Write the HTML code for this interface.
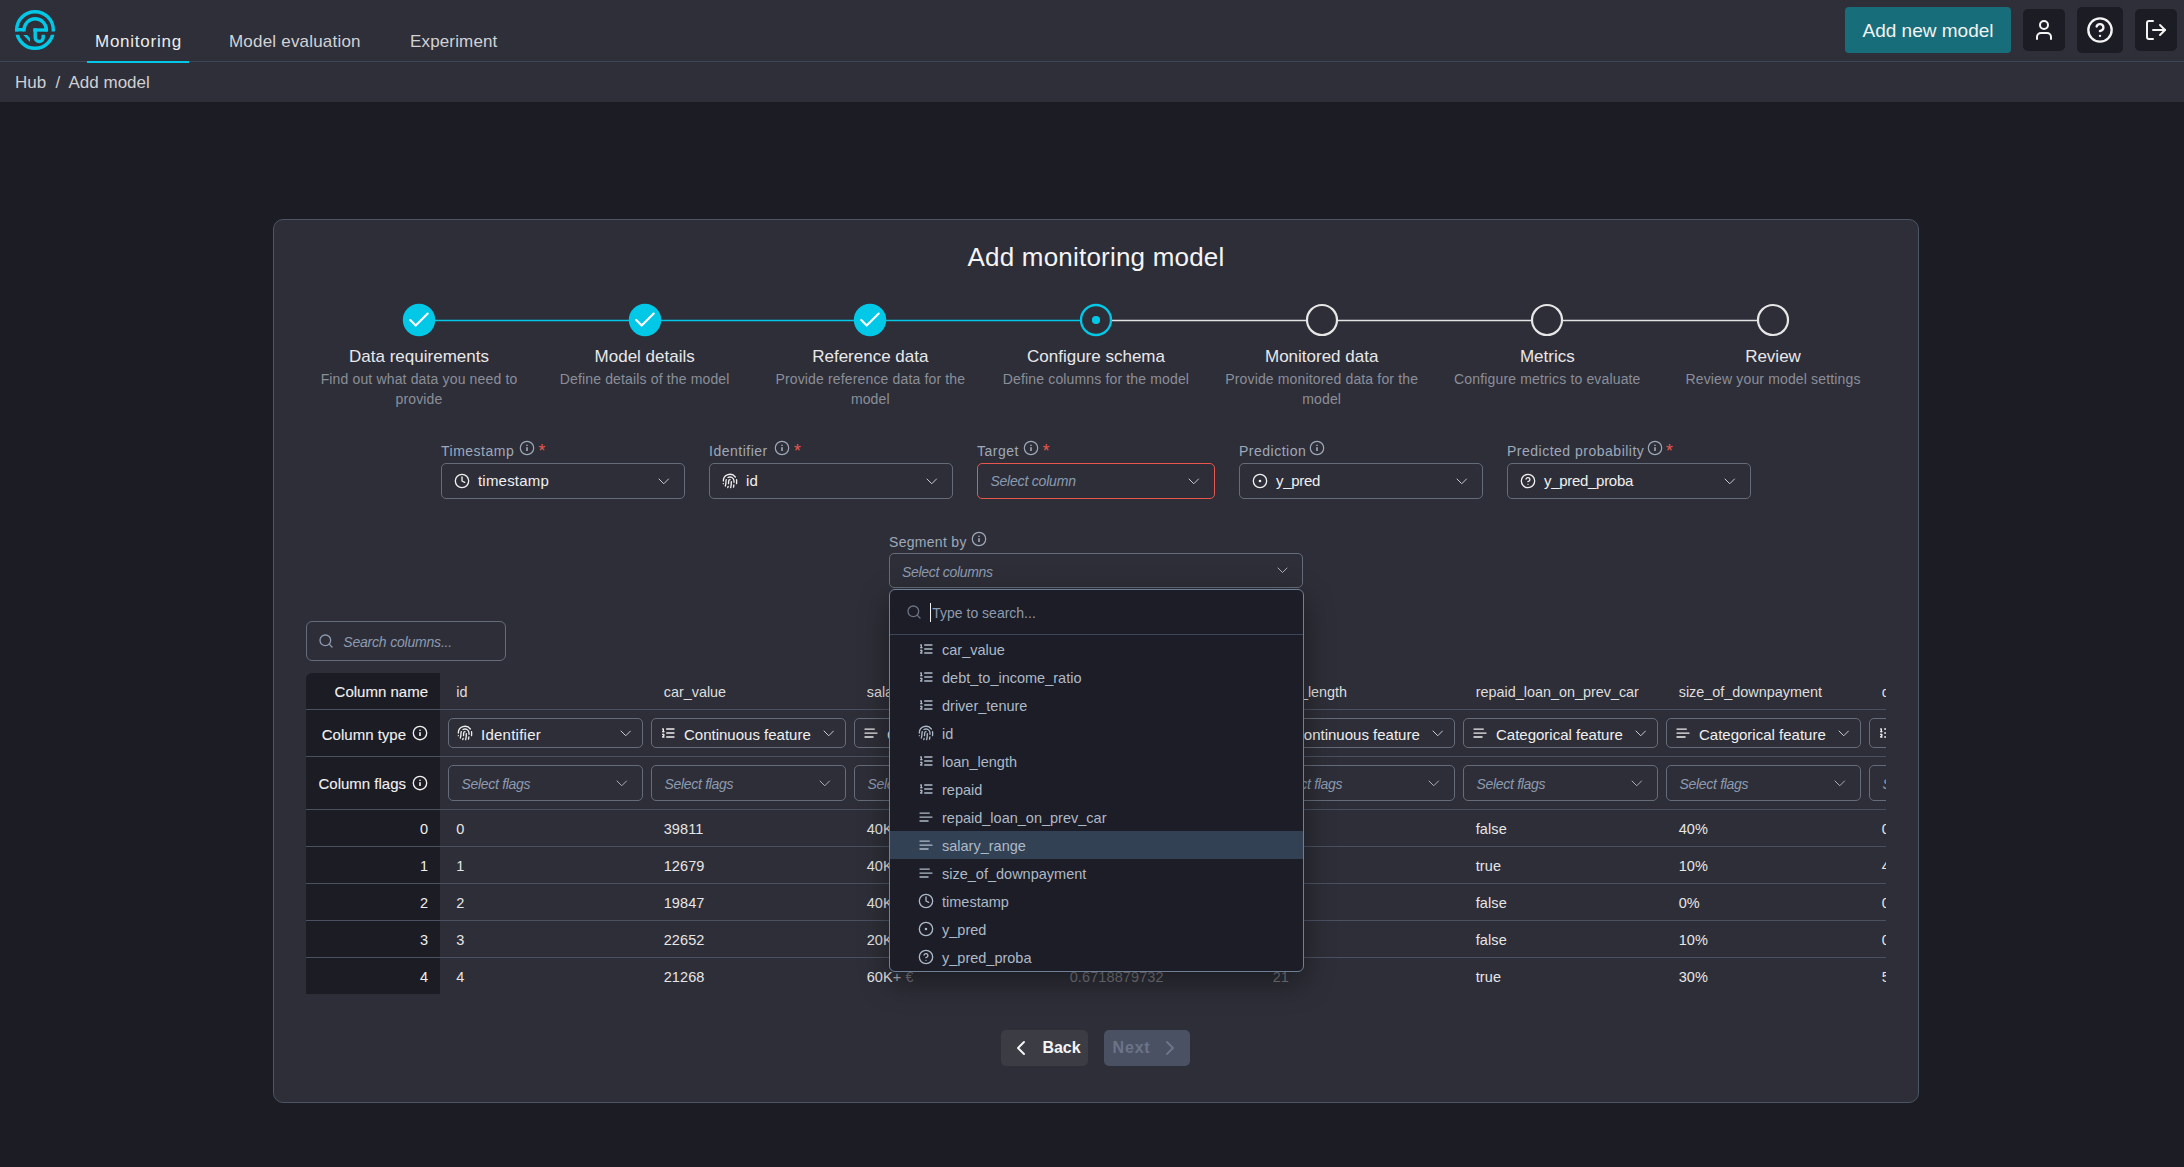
<!DOCTYPE html><html><head><meta charset="utf-8"><title>Add monitoring model</title><style>
html,body{margin:0;padding:0;}
body{width:2184px;height:1167px;overflow:hidden;position:relative;background:#1c1c24;font-family:"Liberation Sans", sans-serif;}
.t{position:absolute;white-space:nowrap;}
.r{position:absolute;}
</style></head><body>
<div class="r" style="left:0px;top:0px;width:2184px;height:61px;background:#2e2f38;"></div>
<div class="r" style="left:0px;top:61px;width:2184px;height:1px;background:#3b4656;"></div>
<div class="r" style="left:0px;top:62px;width:2184px;height:40px;background:#2e2f38;"></div>
<svg class="r" style="left:10px;top:5px;" width="50" height="50" viewBox="0 0 50 50" fill="none">
<defs><clipPath id="lgt"><rect x="0" y="0" width="100" height="31.6"/></clipPath>
<clipPath id="lgb"><rect x="0" y="34.8" width="100" height="30"/></clipPath></defs>
<g transform="translate(-10,-5)" stroke="#00c8e6" stroke-width="3.4" fill="none">
<circle cx="35" cy="30" r="18.3" clip-path="url(#lgt)"/>
<circle cx="35" cy="30" r="18.3" clip-path="url(#lgb)"/>
<path d="M15 29.7 H24" />
<path d="M24 31.6 V30 A11.2 11.2 0 0 1 46.4 30 V31.6" />
<path d="M33.3 30 H47.5" />
<path d="M35.2 28.5 V37.5 A4 4 0 0 0 43.2 37.5 V34.8" />
</g>
<polygon transform="translate(-10,-5)" points="23.3,35 27.2,35 30,38.2 30,42" fill="#00c8e6"/>
</svg>
<div class="t" style="left:95.00px;top:32.61px;font-size:17px;line-height:17px;color:#ececec;letter-spacing:0.75px;">Monitoring</div>
<div class="t" style="left:229.00px;top:32.61px;font-size:17px;line-height:17px;color:#d2d2d6;letter-spacing:0.2px;">Model evaluation</div>
<div class="t" style="left:410.00px;top:32.61px;font-size:17px;line-height:17px;color:#d2d2d6;letter-spacing:0.15px;">Experiment</div>
<div class="r" style="left:87px;top:61px;width:102px;height:2px;background:#00c8e6;"></div>
<div class="r" style="left:1845px;top:7px;width:166px;height:46px;background:#176e7a;border-radius:4px;"></div>
<div class="t" style="left:1845.00px;width:166px;text-align:center;top:20.92px;font-size:19px;line-height:19px;color:#f2f2f2;">Add new model</div>
<div class="r" style="left:2023px;top:9px;width:42px;height:42px;background:#1c1c24;border-radius:5px;"></div>
<div class="r" style="left:2077px;top:7px;width:46px;height:46px;background:#1c1c24;border-radius:5px;"></div>
<div class="r" style="left:2135px;top:9px;width:42px;height:42px;background:#1c1c24;border-radius:5px;"></div>
<div class="t" style="left:15.00px;top:73.61px;font-size:17px;line-height:17px;color:#d0d0d4;">Hub</div>
<div class="t" style="left:55.50px;top:73.61px;font-size:17px;line-height:17px;color:#d0d0d4;">/</div>
<div class="t" style="left:68.50px;top:73.61px;font-size:17px;line-height:17px;color:#d0d0d4;">Add model</div>
<div class="r" style="left:273px;top:219px;width:1646px;height:884px;background:#2e2e38;border:1px solid #4b5563;box-sizing:border-box;border-radius:10px;"></div>
<div class="t" style="left:796.00px;width:600px;text-align:center;top:243.99px;font-size:26px;line-height:26px;color:#f4f4f4;letter-spacing:0.2px;">Add monitoring model</div>
<svg class="r" style="left:400px;top:310px" width="1400" height="20" viewBox="400 310 1400 20"><line x1="419" y1="320.5" x2="1096" y2="320.5" stroke="#00c8e6" stroke-width="1.6"/><line x1="1096" y1="320.5" x2="1773" y2="320.5" stroke="#e2e2e2" stroke-width="1.6"/></svg>
<svg class="r" style="left:402px;top:303px;" width="34" height="34" viewBox="0 0 34 34" fill="none"><circle cx="17" cy="17" r="16.2" fill="#00c8e6"/><g transform="translate(3.9,4.0) scale(1.09)"><path d="M20 6 9 17l-5-5" stroke="#ffffff" stroke-width="2" fill="none" stroke-linecap="round" stroke-linejoin="round"/></g></svg>
<svg class="r" style="left:628px;top:303px;" width="34" height="34" viewBox="0 0 34 34" fill="none"><circle cx="17" cy="17" r="16.2" fill="#00c8e6"/><g transform="translate(3.9,4.0) scale(1.09)"><path d="M20 6 9 17l-5-5" stroke="#ffffff" stroke-width="2" fill="none" stroke-linecap="round" stroke-linejoin="round"/></g></svg>
<svg class="r" style="left:853px;top:303px;" width="34" height="34" viewBox="0 0 34 34" fill="none"><circle cx="17" cy="17" r="16.2" fill="#00c8e6"/><g transform="translate(3.9,4.0) scale(1.09)"><path d="M20 6 9 17l-5-5" stroke="#ffffff" stroke-width="2" fill="none" stroke-linecap="round" stroke-linejoin="round"/></g></svg>
<svg class="r" style="left:1079px;top:303px;" width="34" height="34" viewBox="0 0 34 34" fill="none"><circle cx="17" cy="17" r="15" fill="#2e2e38" stroke="#00c8e6" stroke-width="2.3"/><circle cx="17" cy="17" r="4.1" fill="#00c8e6"/></svg>
<svg class="r" style="left:1305px;top:303px;" width="34" height="34" viewBox="0 0 34 34" fill="none"><circle cx="17" cy="17" r="15" fill="#2e2e38" stroke="#e6e6e6" stroke-width="2.2"/></svg>
<svg class="r" style="left:1530px;top:303px;" width="34" height="34" viewBox="0 0 34 34" fill="none"><circle cx="17" cy="17" r="15" fill="#2e2e38" stroke="#e6e6e6" stroke-width="2.2"/></svg>
<svg class="r" style="left:1756px;top:303px;" width="34" height="34" viewBox="0 0 34 34" fill="none"><circle cx="17" cy="17" r="15" fill="#2e2e38" stroke="#e6e6e6" stroke-width="2.2"/></svg>
<div class="t" style="left:299.00px;width:240px;text-align:center;top:347.61px;font-size:17px;line-height:17px;color:#e8e8ea;">Data requirements</div>
<div class="t" style="left:299.00px;width:240px;text-align:center;top:372.15px;font-size:14px;line-height:14px;color:#8b8e98;letter-spacing:0.15px;">Find out what data you need to</div>
<div class="t" style="left:299.00px;width:240px;text-align:center;top:392.15px;font-size:14px;line-height:14px;color:#8b8e98;letter-spacing:0.15px;">provide</div>
<div class="t" style="left:524.67px;width:240px;text-align:center;top:347.61px;font-size:17px;line-height:17px;color:#e8e8ea;">Model details</div>
<div class="t" style="left:524.67px;width:240px;text-align:center;top:372.15px;font-size:14px;line-height:14px;color:#8b8e98;letter-spacing:0.15px;">Define details of the model</div>
<div class="t" style="left:750.34px;width:240px;text-align:center;top:347.61px;font-size:17px;line-height:17px;color:#e8e8ea;">Reference data</div>
<div class="t" style="left:750.34px;width:240px;text-align:center;top:372.15px;font-size:14px;line-height:14px;color:#8b8e98;letter-spacing:0.15px;">Provide reference data for the</div>
<div class="t" style="left:750.34px;width:240px;text-align:center;top:392.15px;font-size:14px;line-height:14px;color:#8b8e98;letter-spacing:0.15px;">model</div>
<div class="t" style="left:976.01px;width:240px;text-align:center;top:347.61px;font-size:17px;line-height:17px;color:#e8e8ea;">Configure schema</div>
<div class="t" style="left:976.01px;width:240px;text-align:center;top:372.15px;font-size:14px;line-height:14px;color:#8b8e98;letter-spacing:0.15px;">Define columns for the model</div>
<div class="t" style="left:1201.68px;width:240px;text-align:center;top:347.61px;font-size:17px;line-height:17px;color:#e8e8ea;">Monitored data</div>
<div class="t" style="left:1201.68px;width:240px;text-align:center;top:372.15px;font-size:14px;line-height:14px;color:#8b8e98;letter-spacing:0.15px;">Provide monitored data for the</div>
<div class="t" style="left:1201.68px;width:240px;text-align:center;top:392.15px;font-size:14px;line-height:14px;color:#8b8e98;letter-spacing:0.15px;">model</div>
<div class="t" style="left:1427.35px;width:240px;text-align:center;top:347.61px;font-size:17px;line-height:17px;color:#e8e8ea;">Metrics</div>
<div class="t" style="left:1427.35px;width:240px;text-align:center;top:372.15px;font-size:14px;line-height:14px;color:#8b8e98;letter-spacing:0.15px;">Configure metrics to evaluate</div>
<div class="t" style="left:1653.02px;width:240px;text-align:center;top:347.61px;font-size:17px;line-height:17px;color:#e8e8ea;">Review</div>
<div class="t" style="left:1653.02px;width:240px;text-align:center;top:372.15px;font-size:14px;line-height:14px;color:#8b8e98;letter-spacing:0.15px;">Review your model settings</div>
<svg class="r" style="left:2032.00px;top:18.00px;color:#f4f4f4" width="24" height="24" viewBox="0 0 24 24" fill="none" stroke="#f4f4f4" stroke-width="2" stroke-linecap="round" stroke-linejoin="round"><circle cx="12" cy="7" r="4"/><path d="M19 21v-2a4 4 0 0 0-4-4H9a4 4 0 0 0-4 4v2"/></svg>
<svg class="r" style="left:2086.00px;top:16.00px;color:#f4f4f4" width="28" height="28" viewBox="0 0 24 24" fill="none" stroke="#f4f4f4" stroke-width="2" stroke-linecap="round" stroke-linejoin="round"><circle cx="12" cy="12" r="10"/><path d="M9.09 9a3 3 0 0 1 5.83 1c0 2-3 3-3 3"/><path d="M12 17h.01"/></svg>
<svg class="r" style="left:2144.00px;top:17.90px;color:#f4f4f4" width="24" height="24" viewBox="0 0 24 24" fill="none" stroke="#f4f4f4" stroke-width="2" stroke-linecap="round" stroke-linejoin="round"><path d="M9 21H5a2 2 0 0 1-2-2V5a2 2 0 0 1 2-2h4"/><polyline points="16 17 21 12 16 7"/><line x1="21" x2="9" y1="12" y2="12"/></svg>
<div class="t" style="left:441.00px;top:444.15px;font-size:14px;line-height:14px;color:#9ea9b9;letter-spacing:0.5px;">Timestamp</div>
<svg class="r" style="left:518.00px;top:439.00px" width="18" height="18" viewBox="0 0 18 18" fill="none"><circle cx="9" cy="9" r="6.7" stroke="#9ea9b9" stroke-width="1.2"/><rect x="8.2" y="5.7" width="1.6" height="1.2" fill="#9ea9b9"/><rect x="8.2" y="8.2" width="1.6" height="3.8" fill="#9ea9b9"/></svg>
<div class="t" style="left:538.50px;top:442.69px;font-size:17.5px;line-height:17.5px;color:#e8574c;">*</div>
<div class="r" style="left:441px;top:463px;width:244px;height:36px;border:1px solid #646c7a;box-sizing:border-box;border-radius:5px;"></div>
<svg class="r" style="left:454.00px;top:473.00px;color:#f0f0f0" width="16" height="16" viewBox="0 0 24 24" fill="none" stroke="#f0f0f0" stroke-width="2" stroke-linecap="round" stroke-linejoin="round"><circle cx="12" cy="12" r="10"/><path d="M12 6v6l4 2"/></svg>
<div class="t" style="left:478.00px;top:473.30px;font-size:15px;line-height:15px;color:#f0f0f0;letter-spacing:0.2px;">timestamp</div>
<svg class="r" style="left:658.25px;top:477.62px" width="11.5" height="6.75" viewBox="-1 -1 11.5 6.75" fill="none" stroke="#c8ccd4" stroke-width="1.0" stroke-linecap="round" stroke-linejoin="round"><path d="M0 0 L4.75 4.75 L9.5 0"/></svg>
<div class="t" style="left:709.00px;top:444.15px;font-size:14px;line-height:14px;color:#9ea9b9;letter-spacing:0.5px;">Identifier</div>
<svg class="r" style="left:772.60px;top:439.00px" width="18" height="18" viewBox="0 0 18 18" fill="none"><circle cx="9" cy="9" r="6.7" stroke="#9ea9b9" stroke-width="1.2"/><rect x="8.2" y="5.7" width="1.6" height="1.2" fill="#9ea9b9"/><rect x="8.2" y="8.2" width="1.6" height="3.8" fill="#9ea9b9"/></svg>
<div class="t" style="left:793.90px;top:442.69px;font-size:17.5px;line-height:17.5px;color:#e8574c;">*</div>
<div class="r" style="left:709px;top:463px;width:244px;height:36px;border:1px solid #646c7a;box-sizing:border-box;border-radius:5px;"></div>
<svg class="r" style="left:722.00px;top:473.00px;color:#f0f0f0" width="16" height="16" viewBox="0 0 24 24" fill="none" stroke="#f0f0f0" stroke-width="2" stroke-linecap="round" stroke-linejoin="round"><path d="M12 10a2 2 0 0 0-2 2c0 1.02-.1 2.51-.26 4"/><path d="M14 13.12c0 2.38 0 6.38-1 8.88"/><path d="M17.29 21.02c.12-.6.43-2.3.5-3.02"/><path d="M2 12a10 10 0 0 1 18-6"/><path d="M2 16h.01"/><path d="M21.8 16c.2-2 .131-5.354 0-6"/><path d="M5 19.5C5.5 18 6 15 6 12a6 6 0 0 1 .34-2"/><path d="M8.65 22c.21-.66.45-1.32.57-2"/><path d="M9 6.8a6 6 0 0 1 9 5.2v2"/></svg>
<div class="t" style="left:746.00px;top:473.30px;font-size:15px;line-height:15px;color:#f0f0f0;letter-spacing:0.2px;">id</div>
<svg class="r" style="left:926.25px;top:477.62px" width="11.5" height="6.75" viewBox="-1 -1 11.5 6.75" fill="none" stroke="#c8ccd4" stroke-width="1.0" stroke-linecap="round" stroke-linejoin="round"><path d="M0 0 L4.75 4.75 L9.5 0"/></svg>
<div class="t" style="left:977.00px;top:444.15px;font-size:14px;line-height:14px;color:#9ea9b9;letter-spacing:0.5px;">Target</div>
<svg class="r" style="left:1021.80px;top:439.00px" width="18" height="18" viewBox="0 0 18 18" fill="none"><circle cx="9" cy="9" r="6.7" stroke="#9ea9b9" stroke-width="1.2"/><rect x="8.2" y="5.7" width="1.6" height="1.2" fill="#9ea9b9"/><rect x="8.2" y="8.2" width="1.6" height="3.8" fill="#9ea9b9"/></svg>
<div class="t" style="left:1042.80px;top:442.69px;font-size:17.5px;line-height:17.5px;color:#e8574c;">*</div>
<div class="r" style="left:977px;top:463px;width:238px;height:36px;border:1px solid #e8574c;box-sizing:border-box;border-radius:5px;"></div>
<div class="t" style="left:990.40px;top:474.15px;font-size:14px;line-height:14px;color:#8d9bb0;font-style:italic;letter-spacing:-0.2px;">Select column</div>
<svg class="r" style="left:1188.25px;top:477.62px" width="11.5" height="6.75" viewBox="-1 -1 11.5 6.75" fill="none" stroke="#c8ccd4" stroke-width="1.0" stroke-linecap="round" stroke-linejoin="round"><path d="M0 0 L4.75 4.75 L9.5 0"/></svg>
<div class="t" style="left:1239.00px;top:444.15px;font-size:14px;line-height:14px;color:#9ea9b9;letter-spacing:0.5px;">Prediction</div>
<svg class="r" style="left:1308.00px;top:439.00px" width="18" height="18" viewBox="0 0 18 18" fill="none"><circle cx="9" cy="9" r="6.7" stroke="#9ea9b9" stroke-width="1.2"/><rect x="8.2" y="5.7" width="1.6" height="1.2" fill="#9ea9b9"/><rect x="8.2" y="8.2" width="1.6" height="3.8" fill="#9ea9b9"/></svg>
<div class="r" style="left:1239px;top:463px;width:244px;height:36px;border:1px solid #646c7a;box-sizing:border-box;border-radius:5px;"></div>
<svg class="r" style="left:1252.00px;top:473.00px;color:#f0f0f0" width="16" height="16" viewBox="0 0 24 24" fill="none" stroke="#f0f0f0" stroke-width="2" stroke-linecap="round" stroke-linejoin="round"><circle cx="12" cy="12" r="10"/><circle cx="12" cy="12" r="1"/></svg>
<div class="t" style="left:1276.00px;top:473.30px;font-size:15px;line-height:15px;color:#f0f0f0;letter-spacing:-0.3px;">y_pred</div>
<svg class="r" style="left:1456.25px;top:477.62px" width="11.5" height="6.75" viewBox="-1 -1 11.5 6.75" fill="none" stroke="#c8ccd4" stroke-width="1.0" stroke-linecap="round" stroke-linejoin="round"><path d="M0 0 L4.75 4.75 L9.5 0"/></svg>
<div class="t" style="left:1507.00px;top:444.15px;font-size:14px;line-height:14px;color:#9ea9b9;letter-spacing:0.5px;">Predicted probability</div>
<svg class="r" style="left:1645.70px;top:439.00px" width="18" height="18" viewBox="0 0 18 18" fill="none"><circle cx="9" cy="9" r="6.7" stroke="#9ea9b9" stroke-width="1.2"/><rect x="8.2" y="5.7" width="1.6" height="1.2" fill="#9ea9b9"/><rect x="8.2" y="8.2" width="1.6" height="3.8" fill="#9ea9b9"/></svg>
<div class="t" style="left:1666.10px;top:442.69px;font-size:17.5px;line-height:17.5px;color:#e8574c;">*</div>
<div class="r" style="left:1507px;top:463px;width:244px;height:36px;border:1px solid #646c7a;box-sizing:border-box;border-radius:5px;"></div>
<svg class="r" style="left:1520.00px;top:473.00px;color:#f0f0f0" width="16" height="16" viewBox="0 0 24 24" fill="none" stroke="#f0f0f0" stroke-width="2" stroke-linecap="round" stroke-linejoin="round"><circle cx="12" cy="12" r="10"/><path d="M9.09 9a3 3 0 0 1 5.83 1c0 2-3 3-3 3"/><path d="M12 17h.01"/></svg>
<div class="t" style="left:1544.00px;top:473.30px;font-size:15px;line-height:15px;color:#f0f0f0;letter-spacing:-0.3px;">y_pred_proba</div>
<svg class="r" style="left:1724.25px;top:477.62px" width="11.5" height="6.75" viewBox="-1 -1 11.5 6.75" fill="none" stroke="#c8ccd4" stroke-width="1.0" stroke-linecap="round" stroke-linejoin="round"><path d="M0 0 L4.75 4.75 L9.5 0"/></svg>
<div class="t" style="left:889.00px;top:535.15px;font-size:14px;line-height:14px;color:#9ea9b9;letter-spacing:0.3px;">Segment by</div>
<svg class="r" style="left:970.00px;top:530.30px" width="18" height="18" viewBox="0 0 18 18" fill="none"><circle cx="9" cy="9" r="6.7" stroke="#9ea9b9" stroke-width="1.2"/><rect x="8.2" y="5.7" width="1.6" height="1.2" fill="#9ea9b9"/><rect x="8.2" y="8.2" width="1.6" height="3.8" fill="#9ea9b9"/></svg>
<div class="r" style="left:889px;top:553px;width:414px;height:35px;border:1px solid #646c7a;box-sizing:border-box;border-radius:5px;"></div>
<div class="t" style="left:902.00px;top:565.15px;font-size:14px;line-height:14px;color:#8d9bb0;font-style:italic;letter-spacing:-0.3px;">Select columns</div>
<svg class="r" style="left:1276.50px;top:567.45px" width="11" height="6.5" viewBox="-1 -1 11 6.5" fill="none" stroke="#aab0ba" stroke-width="1.0" stroke-linecap="round" stroke-linejoin="round"><path d="M0 0 L4.5 4.5 L9 0"/></svg>
<div class="r" style="left:306px;top:621px;width:200px;height:40px;border:1px solid #646c7a;box-sizing:border-box;border-radius:6px;"></div>
<svg class="r" style="left:317.90px;top:632.90px;color:#8d9bb0" width="16" height="16" viewBox="0 0 24 24" fill="none" stroke="#8d9bb0" stroke-width="2" stroke-linecap="round" stroke-linejoin="round"><circle cx="11" cy="11" r="8"/><path d="m21 21-4.3-4.3"/></svg>
<div class="t" style="left:343.30px;top:635.45px;font-size:14px;line-height:14px;color:#8d9bb0;font-style:italic;letter-spacing:-0.2px;">Search columns...</div>
<div class="r" style="left:306px;top:673px;width:1580px;height:321px;overflow:hidden;">
<div class="r" style="left:-306px;top:-673px;width:2184px;height:1167px;">
<div class="r" style="left:306px;top:673px;width:134px;height:321px;background:#1c1c24;border-top-left-radius:6px;"></div>
<div class="r" style="left:306px;top:709px;width:1580px;height:1px;background:#4a5262;"></div>
<div class="r" style="left:306px;top:756px;width:1580px;height:1px;background:#4a5262;"></div>
<div class="r" style="left:306px;top:809px;width:1580px;height:1px;background:#4a5262;"></div>
<div class="r" style="left:306px;top:846px;width:1580px;height:1px;background:#4a5262;"></div>
<div class="r" style="left:306px;top:883px;width:1580px;height:1px;background:#4a5262;"></div>
<div class="r" style="left:306px;top:920px;width:1580px;height:1px;background:#4a5262;"></div>
<div class="r" style="left:306px;top:957px;width:1580px;height:1px;background:#4a5262;"></div>
<div class="t" style="left:228.00px;width:200px;text-align:right;top:684.30px;font-size:15px;line-height:15px;color:#f2f2f2;-webkit-text-stroke:0.1px #f2f2f2;">Column name</div>
<div class="t" style="left:206.00px;width:200px;text-align:right;top:726.60px;font-size:15px;line-height:15px;color:#f2f2f2;-webkit-text-stroke:0.1px #f2f2f2;">Column type</div>
<svg class="r" style="left:411.10px;top:723.80px" width="18" height="18" viewBox="0 0 18 18" fill="none"><circle cx="9" cy="9" r="6.7" stroke="#f2f2f2" stroke-width="1.35"/><rect x="8.2" y="5.7" width="1.6" height="1.2" fill="#f2f2f2"/><rect x="8.2" y="8.2" width="1.6" height="3.8" fill="#f2f2f2"/></svg>
<div class="t" style="left:206.00px;width:200px;text-align:right;top:776.30px;font-size:15px;line-height:15px;color:#f2f2f2;-webkit-text-stroke:0.1px #f2f2f2;">Column flags</div>
<svg class="r" style="left:411.10px;top:774.10px" width="18" height="18" viewBox="0 0 18 18" fill="none"><circle cx="9" cy="9" r="6.7" stroke="#f2f2f2" stroke-width="1.35"/><rect x="8.2" y="5.7" width="1.6" height="1.2" fill="#f2f2f2"/><rect x="8.2" y="8.2" width="1.6" height="3.8" fill="#f2f2f2"/></svg>
<div class="t" style="left:456.30px;top:684.81px;font-size:14.4px;line-height:14.4px;color:#dedede;">id</div>
<div class="r" style="left:448px;top:718px;width:195px;height:30px;border:1px solid #646c7a;box-sizing:border-box;border-radius:5px;"></div>
<svg class="r" style="left:457.00px;top:725.00px;color:#eeeeee" width="16" height="16" viewBox="0 0 24 24" fill="none" stroke="#eeeeee" stroke-width="2" stroke-linecap="round" stroke-linejoin="round"><path d="M12 10a2 2 0 0 0-2 2c0 1.02-.1 2.51-.26 4"/><path d="M14 13.12c0 2.38 0 6.38-1 8.88"/><path d="M17.29 21.02c.12-.6.43-2.3.5-3.02"/><path d="M2 12a10 10 0 0 1 18-6"/><path d="M2 16h.01"/><path d="M21.8 16c.2-2 .131-5.354 0-6"/><path d="M5 19.5C5.5 18 6 15 6 12a6 6 0 0 1 .34-2"/><path d="M8.65 22c.21-.66.45-1.32.57-2"/><path d="M9 6.8a6 6 0 0 1 9 5.2v2"/></svg>
<div class="t" style="left:481.00px;top:726.70px;font-size:15px;line-height:15px;color:#f0f0f0;letter-spacing:0.25px;">Identifier</div>
<svg class="r" style="left:619.75px;top:729.62px" width="11.5" height="6.75" viewBox="-1 -1 11.5 6.75" fill="none" stroke="#c8ccd4" stroke-width="1.0" stroke-linecap="round" stroke-linejoin="round"><path d="M0 0 L4.75 4.75 L9.5 0"/></svg>
<div class="r" style="left:448px;top:765px;width:195px;height:36px;border:1px solid #646c7a;box-sizing:border-box;border-radius:5px;"></div>
<div class="t" style="left:461.50px;top:777.15px;font-size:14px;line-height:14px;color:#8d9bb0;font-style:italic;letter-spacing:-0.3px;">Select flags</div>
<svg class="r" style="left:616.15px;top:779.62px" width="11.5" height="6.75" viewBox="-1 -1 11.5 6.75" fill="none" stroke="#aab0ba" stroke-width="1.0" stroke-linecap="round" stroke-linejoin="round"><path d="M0 0 L4.75 4.75 L9.5 0"/></svg>
<div class="t" style="left:456.30px;top:821.73px;font-size:14.5px;line-height:14.5px;color:#e6e6e6;letter-spacing:0.1px;">0</div>
<div class="t" style="left:456.30px;top:858.73px;font-size:14.5px;line-height:14.5px;color:#e6e6e6;letter-spacing:0.1px;">1</div>
<div class="t" style="left:456.30px;top:895.73px;font-size:14.5px;line-height:14.5px;color:#e6e6e6;letter-spacing:0.1px;">2</div>
<div class="t" style="left:456.30px;top:932.73px;font-size:14.5px;line-height:14.5px;color:#e6e6e6;letter-spacing:0.1px;">3</div>
<div class="t" style="left:456.30px;top:969.73px;font-size:14.5px;line-height:14.5px;color:#e6e6e6;letter-spacing:0.1px;">4</div>
<div class="t" style="left:663.70px;top:684.81px;font-size:14.4px;line-height:14.4px;color:#dedede;">car_value</div>
<div class="r" style="left:651px;top:718px;width:195px;height:30px;border:1px solid #646c7a;box-sizing:border-box;border-radius:5px;"></div>
<svg class="r" style="left:660.00px;top:725.00px;color:#eeeeee" width="16" height="16" viewBox="0 0 24 24" fill="none" stroke="#eeeeee" stroke-width="2" stroke-linecap="round" stroke-linejoin="round"><path d="M10 12h11"/><path d="M10 18h11"/><path d="M10 6h11"/><path d="M4 10h2"/><path d="M4 6h1v4"/><path d="M6 18H4c0-1 2-2 2-3s-1-1.5-2-1"/></svg>
<div class="t" style="left:684.00px;top:726.70px;font-size:15px;line-height:15px;color:#f0f0f0;">Continuous feature</div>
<svg class="r" style="left:822.75px;top:729.62px" width="11.5" height="6.75" viewBox="-1 -1 11.5 6.75" fill="none" stroke="#c8ccd4" stroke-width="1.0" stroke-linecap="round" stroke-linejoin="round"><path d="M0 0 L4.75 4.75 L9.5 0"/></svg>
<div class="r" style="left:651px;top:765px;width:195px;height:36px;border:1px solid #646c7a;box-sizing:border-box;border-radius:5px;"></div>
<div class="t" style="left:664.50px;top:777.15px;font-size:14px;line-height:14px;color:#8d9bb0;font-style:italic;letter-spacing:-0.3px;">Select flags</div>
<svg class="r" style="left:819.15px;top:779.62px" width="11.5" height="6.75" viewBox="-1 -1 11.5 6.75" fill="none" stroke="#aab0ba" stroke-width="1.0" stroke-linecap="round" stroke-linejoin="round"><path d="M0 0 L4.75 4.75 L9.5 0"/></svg>
<div class="t" style="left:663.70px;top:821.73px;font-size:14.5px;line-height:14.5px;color:#e6e6e6;letter-spacing:0.1px;">39811</div>
<div class="t" style="left:663.70px;top:858.73px;font-size:14.5px;line-height:14.5px;color:#e6e6e6;letter-spacing:0.1px;">12679</div>
<div class="t" style="left:663.70px;top:895.73px;font-size:14.5px;line-height:14.5px;color:#e6e6e6;letter-spacing:0.1px;">19847</div>
<div class="t" style="left:663.70px;top:932.73px;font-size:14.5px;line-height:14.5px;color:#e6e6e6;letter-spacing:0.1px;">22652</div>
<div class="t" style="left:663.70px;top:969.73px;font-size:14.5px;line-height:14.5px;color:#e6e6e6;letter-spacing:0.1px;">21268</div>
<div class="t" style="left:866.70px;top:684.81px;font-size:14.4px;line-height:14.4px;color:#dedede;">salary_range</div>
<div class="r" style="left:854px;top:718px;width:195px;height:30px;border:1px solid #646c7a;box-sizing:border-box;border-radius:5px;"></div>
<svg class="r" style="left:863.00px;top:725.00px;color:#eeeeee" width="16" height="16" viewBox="0 0 24 24" fill="none" stroke="#eeeeee" stroke-width="2" stroke-linecap="round" stroke-linejoin="round"><path d="M17 6.1H3"/><path d="M21 12.1H3"/><path d="M15.1 18H3"/></svg>
<div class="t" style="left:887.00px;top:726.70px;font-size:15px;line-height:15px;color:#f0f0f0;">Categorical feature</div>
<svg class="r" style="left:1025.75px;top:729.62px" width="11.5" height="6.75" viewBox="-1 -1 11.5 6.75" fill="none" stroke="#c8ccd4" stroke-width="1.0" stroke-linecap="round" stroke-linejoin="round"><path d="M0 0 L4.75 4.75 L9.5 0"/></svg>
<div class="r" style="left:854px;top:765px;width:195px;height:36px;border:1px solid #646c7a;box-sizing:border-box;border-radius:5px;"></div>
<div class="t" style="left:867.50px;top:777.15px;font-size:14px;line-height:14px;color:#8d9bb0;font-style:italic;letter-spacing:-0.3px;">Select flags</div>
<svg class="r" style="left:1022.15px;top:779.62px" width="11.5" height="6.75" viewBox="-1 -1 11.5 6.75" fill="none" stroke="#aab0ba" stroke-width="1.0" stroke-linecap="round" stroke-linejoin="round"><path d="M0 0 L4.75 4.75 L9.5 0"/></svg>
<div class="t" style="left:866.70px;top:821.73px;font-size:14.5px;line-height:14.5px;color:#e6e6e6;letter-spacing:0.1px;">40K-60K €</div>
<div class="t" style="left:866.70px;top:858.73px;font-size:14.5px;line-height:14.5px;color:#e6e6e6;letter-spacing:0.1px;">40K-60K €</div>
<div class="t" style="left:866.70px;top:895.73px;font-size:14.5px;line-height:14.5px;color:#e6e6e6;letter-spacing:0.1px;">40K-60K €</div>
<div class="t" style="left:866.70px;top:932.73px;font-size:14.5px;line-height:14.5px;color:#e6e6e6;letter-spacing:0.1px;">20K-40K €</div>
<div class="t" style="left:866.70px;top:969.73px;font-size:14.5px;line-height:14.5px;color:#e6e6e6;letter-spacing:0.1px;">60K<span style="color:#b0b0b4">+</span><span style="color:#77787e"> €</span></div>
<div class="t" style="left:1069.70px;top:684.81px;font-size:14.4px;line-height:14.4px;color:#dedede;">debt_to_income_ratio</div>
<div class="r" style="left:1057px;top:718px;width:195px;height:30px;border:1px solid #646c7a;box-sizing:border-box;border-radius:5px;"></div>
<svg class="r" style="left:1066.00px;top:725.00px;color:#eeeeee" width="16" height="16" viewBox="0 0 24 24" fill="none" stroke="#eeeeee" stroke-width="2" stroke-linecap="round" stroke-linejoin="round"><path d="M10 12h11"/><path d="M10 18h11"/><path d="M10 6h11"/><path d="M4 10h2"/><path d="M4 6h1v4"/><path d="M6 18H4c0-1 2-2 2-3s-1-1.5-2-1"/></svg>
<div class="t" style="left:1090.00px;top:726.70px;font-size:15px;line-height:15px;color:#f0f0f0;">Continuous feature</div>
<svg class="r" style="left:1228.75px;top:729.62px" width="11.5" height="6.75" viewBox="-1 -1 11.5 6.75" fill="none" stroke="#c8ccd4" stroke-width="1.0" stroke-linecap="round" stroke-linejoin="round"><path d="M0 0 L4.75 4.75 L9.5 0"/></svg>
<div class="r" style="left:1057px;top:765px;width:195px;height:36px;border:1px solid #646c7a;box-sizing:border-box;border-radius:5px;"></div>
<div class="t" style="left:1070.50px;top:777.15px;font-size:14px;line-height:14px;color:#8d9bb0;font-style:italic;letter-spacing:-0.3px;">Select flags</div>
<svg class="r" style="left:1225.15px;top:779.62px" width="11.5" height="6.75" viewBox="-1 -1 11.5 6.75" fill="none" stroke="#aab0ba" stroke-width="1.0" stroke-linecap="round" stroke-linejoin="round"><path d="M0 0 L4.75 4.75 L9.5 0"/></svg>
<div class="t" style="left:1069.70px;top:821.73px;font-size:14.5px;line-height:14.5px;color:#e6e6e6;letter-spacing:0.1px;">0.5196</div>
<div class="t" style="left:1069.70px;top:858.73px;font-size:14.5px;line-height:14.5px;color:#e6e6e6;letter-spacing:0.1px;">0.5871</div>
<div class="t" style="left:1069.70px;top:895.73px;font-size:14.5px;line-height:14.5px;color:#e6e6e6;letter-spacing:0.1px;">0.4323</div>
<div class="t" style="left:1069.70px;top:932.73px;font-size:14.5px;line-height:14.5px;color:#e6e6e6;letter-spacing:0.1px;">0.3812</div>
<div class="t" style="left:1069.70px;top:969.73px;font-size:14.5px;line-height:14.5px;color:#77787e;letter-spacing:0.1px;">0.6718879732</div>
<div class="t" style="left:1272.70px;top:684.81px;font-size:14.4px;line-height:14.4px;color:#dedede;">loan_length</div>
<div class="r" style="left:1260px;top:718px;width:195px;height:30px;border:1px solid #646c7a;box-sizing:border-box;border-radius:5px;"></div>
<svg class="r" style="left:1269.00px;top:725.00px;color:#eeeeee" width="16" height="16" viewBox="0 0 24 24" fill="none" stroke="#eeeeee" stroke-width="2" stroke-linecap="round" stroke-linejoin="round"><path d="M10 12h11"/><path d="M10 18h11"/><path d="M10 6h11"/><path d="M4 10h2"/><path d="M4 6h1v4"/><path d="M6 18H4c0-1 2-2 2-3s-1-1.5-2-1"/></svg>
<div class="t" style="left:1293.00px;top:726.70px;font-size:15px;line-height:15px;color:#f0f0f0;">Continuous feature</div>
<svg class="r" style="left:1431.75px;top:729.62px" width="11.5" height="6.75" viewBox="-1 -1 11.5 6.75" fill="none" stroke="#c8ccd4" stroke-width="1.0" stroke-linecap="round" stroke-linejoin="round"><path d="M0 0 L4.75 4.75 L9.5 0"/></svg>
<div class="r" style="left:1260px;top:765px;width:195px;height:36px;border:1px solid #646c7a;box-sizing:border-box;border-radius:5px;"></div>
<div class="t" style="left:1273.50px;top:777.15px;font-size:14px;line-height:14px;color:#8d9bb0;font-style:italic;letter-spacing:-0.3px;">Select flags</div>
<svg class="r" style="left:1428.15px;top:779.62px" width="11.5" height="6.75" viewBox="-1 -1 11.5 6.75" fill="none" stroke="#aab0ba" stroke-width="1.0" stroke-linecap="round" stroke-linejoin="round"><path d="M0 0 L4.75 4.75 L9.5 0"/></svg>
<div class="t" style="left:1272.70px;top:821.73px;font-size:14.5px;line-height:14.5px;color:#e6e6e6;letter-spacing:0.1px;">21</div>
<div class="t" style="left:1272.70px;top:858.73px;font-size:14.5px;line-height:14.5px;color:#e6e6e6;letter-spacing:0.1px;">24</div>
<div class="t" style="left:1272.70px;top:895.73px;font-size:14.5px;line-height:14.5px;color:#e6e6e6;letter-spacing:0.1px;">18</div>
<div class="t" style="left:1272.70px;top:932.73px;font-size:14.5px;line-height:14.5px;color:#e6e6e6;letter-spacing:0.1px;">30</div>
<div class="t" style="left:1272.70px;top:969.73px;font-size:14.5px;line-height:14.5px;color:#77787e;letter-spacing:0.1px;">21</div>
<div class="t" style="left:1475.70px;top:684.81px;font-size:14.4px;line-height:14.4px;color:#dedede;">repaid_loan_on_prev_car</div>
<div class="r" style="left:1463px;top:718px;width:195px;height:30px;border:1px solid #646c7a;box-sizing:border-box;border-radius:5px;"></div>
<svg class="r" style="left:1472.00px;top:725.00px;color:#eeeeee" width="16" height="16" viewBox="0 0 24 24" fill="none" stroke="#eeeeee" stroke-width="2" stroke-linecap="round" stroke-linejoin="round"><path d="M17 6.1H3"/><path d="M21 12.1H3"/><path d="M15.1 18H3"/></svg>
<div class="t" style="left:1496.00px;top:726.70px;font-size:15px;line-height:15px;color:#f0f0f0;">Categorical feature</div>
<svg class="r" style="left:1634.75px;top:729.62px" width="11.5" height="6.75" viewBox="-1 -1 11.5 6.75" fill="none" stroke="#c8ccd4" stroke-width="1.0" stroke-linecap="round" stroke-linejoin="round"><path d="M0 0 L4.75 4.75 L9.5 0"/></svg>
<div class="r" style="left:1463px;top:765px;width:195px;height:36px;border:1px solid #646c7a;box-sizing:border-box;border-radius:5px;"></div>
<div class="t" style="left:1476.50px;top:777.15px;font-size:14px;line-height:14px;color:#8d9bb0;font-style:italic;letter-spacing:-0.3px;">Select flags</div>
<svg class="r" style="left:1631.15px;top:779.62px" width="11.5" height="6.75" viewBox="-1 -1 11.5 6.75" fill="none" stroke="#aab0ba" stroke-width="1.0" stroke-linecap="round" stroke-linejoin="round"><path d="M0 0 L4.75 4.75 L9.5 0"/></svg>
<div class="t" style="left:1475.70px;top:821.73px;font-size:14.5px;line-height:14.5px;color:#e6e6e6;letter-spacing:0.1px;">false</div>
<div class="t" style="left:1475.70px;top:858.73px;font-size:14.5px;line-height:14.5px;color:#e6e6e6;letter-spacing:0.1px;">true</div>
<div class="t" style="left:1475.70px;top:895.73px;font-size:14.5px;line-height:14.5px;color:#e6e6e6;letter-spacing:0.1px;">false</div>
<div class="t" style="left:1475.70px;top:932.73px;font-size:14.5px;line-height:14.5px;color:#e6e6e6;letter-spacing:0.1px;">false</div>
<div class="t" style="left:1475.70px;top:969.73px;font-size:14.5px;line-height:14.5px;color:#e6e6e6;letter-spacing:0.1px;">true</div>
<div class="t" style="left:1678.70px;top:684.81px;font-size:14.4px;line-height:14.4px;color:#dedede;">size_of_downpayment</div>
<div class="r" style="left:1666px;top:718px;width:195px;height:30px;border:1px solid #646c7a;box-sizing:border-box;border-radius:5px;"></div>
<svg class="r" style="left:1675.00px;top:725.00px;color:#eeeeee" width="16" height="16" viewBox="0 0 24 24" fill="none" stroke="#eeeeee" stroke-width="2" stroke-linecap="round" stroke-linejoin="round"><path d="M17 6.1H3"/><path d="M21 12.1H3"/><path d="M15.1 18H3"/></svg>
<div class="t" style="left:1699.00px;top:726.70px;font-size:15px;line-height:15px;color:#f0f0f0;">Categorical feature</div>
<svg class="r" style="left:1837.75px;top:729.62px" width="11.5" height="6.75" viewBox="-1 -1 11.5 6.75" fill="none" stroke="#c8ccd4" stroke-width="1.0" stroke-linecap="round" stroke-linejoin="round"><path d="M0 0 L4.75 4.75 L9.5 0"/></svg>
<div class="r" style="left:1666px;top:765px;width:195px;height:36px;border:1px solid #646c7a;box-sizing:border-box;border-radius:5px;"></div>
<div class="t" style="left:1679.50px;top:777.15px;font-size:14px;line-height:14px;color:#8d9bb0;font-style:italic;letter-spacing:-0.3px;">Select flags</div>
<svg class="r" style="left:1834.15px;top:779.62px" width="11.5" height="6.75" viewBox="-1 -1 11.5 6.75" fill="none" stroke="#aab0ba" stroke-width="1.0" stroke-linecap="round" stroke-linejoin="round"><path d="M0 0 L4.75 4.75 L9.5 0"/></svg>
<div class="t" style="left:1678.70px;top:821.73px;font-size:14.5px;line-height:14.5px;color:#e6e6e6;letter-spacing:0.1px;">40%</div>
<div class="t" style="left:1678.70px;top:858.73px;font-size:14.5px;line-height:14.5px;color:#e6e6e6;letter-spacing:0.1px;">10%</div>
<div class="t" style="left:1678.70px;top:895.73px;font-size:14.5px;line-height:14.5px;color:#e6e6e6;letter-spacing:0.1px;">0%</div>
<div class="t" style="left:1678.70px;top:932.73px;font-size:14.5px;line-height:14.5px;color:#e6e6e6;letter-spacing:0.1px;">10%</div>
<div class="t" style="left:1678.70px;top:969.73px;font-size:14.5px;line-height:14.5px;color:#e6e6e6;letter-spacing:0.1px;">30%</div>
<div class="t" style="left:1881.70px;top:684.81px;font-size:14.4px;line-height:14.4px;color:#dedede;">driver_tenure</div>
<div class="r" style="left:1869px;top:718px;width:195px;height:30px;border:1px solid #646c7a;box-sizing:border-box;border-radius:5px;"></div>
<svg class="r" style="left:1878.00px;top:725.00px;color:#eeeeee" width="16" height="16" viewBox="0 0 24 24" fill="none" stroke="#eeeeee" stroke-width="2" stroke-linecap="round" stroke-linejoin="round"><path d="M10 12h11"/><path d="M10 18h11"/><path d="M10 6h11"/><path d="M4 10h2"/><path d="M4 6h1v4"/><path d="M6 18H4c0-1 2-2 2-3s-1-1.5-2-1"/></svg>
<div class="t" style="left:1902.00px;top:726.70px;font-size:15px;line-height:15px;color:#f0f0f0;">Continuous feature</div>
<svg class="r" style="left:2040.75px;top:729.62px" width="11.5" height="6.75" viewBox="-1 -1 11.5 6.75" fill="none" stroke="#c8ccd4" stroke-width="1.0" stroke-linecap="round" stroke-linejoin="round"><path d="M0 0 L4.75 4.75 L9.5 0"/></svg>
<div class="r" style="left:1869px;top:765px;width:195px;height:36px;border:1px solid #646c7a;box-sizing:border-box;border-radius:5px;"></div>
<div class="t" style="left:1882.50px;top:777.15px;font-size:14px;line-height:14px;color:#8d9bb0;font-style:italic;letter-spacing:-0.3px;">Select flags</div>
<svg class="r" style="left:2037.15px;top:779.62px" width="11.5" height="6.75" viewBox="-1 -1 11.5 6.75" fill="none" stroke="#aab0ba" stroke-width="1.0" stroke-linecap="round" stroke-linejoin="round"><path d="M0 0 L4.75 4.75 L9.5 0"/></svg>
<div class="t" style="left:1881.70px;top:821.73px;font-size:14.5px;line-height:14.5px;color:#e6e6e6;letter-spacing:0.1px;">0</div>
<div class="t" style="left:1881.70px;top:858.73px;font-size:14.5px;line-height:14.5px;color:#e6e6e6;letter-spacing:0.1px;">4</div>
<div class="t" style="left:1881.70px;top:895.73px;font-size:14.5px;line-height:14.5px;color:#e6e6e6;letter-spacing:0.1px;">0</div>
<div class="t" style="left:1881.70px;top:932.73px;font-size:14.5px;line-height:14.5px;color:#e6e6e6;letter-spacing:0.1px;">0</div>
<div class="t" style="left:1881.70px;top:969.73px;font-size:14.5px;line-height:14.5px;color:#e6e6e6;letter-spacing:0.1px;">5</div>
<div class="t" style="left:368.00px;width:60px;text-align:right;top:821.73px;font-size:14.5px;line-height:14.5px;color:#f0f0f0;">0</div>
<div class="t" style="left:368.00px;width:60px;text-align:right;top:858.73px;font-size:14.5px;line-height:14.5px;color:#f0f0f0;">1</div>
<div class="t" style="left:368.00px;width:60px;text-align:right;top:895.73px;font-size:14.5px;line-height:14.5px;color:#f0f0f0;">2</div>
<div class="t" style="left:368.00px;width:60px;text-align:right;top:932.73px;font-size:14.5px;line-height:14.5px;color:#f0f0f0;">3</div>
<div class="t" style="left:368.00px;width:60px;text-align:right;top:969.73px;font-size:14.5px;line-height:14.5px;color:#f0f0f0;">4</div>
</div></div>
<div class="r" style="left:889px;top:589px;width:415px;height:383px;background:#1c1d26;border:1px solid #6f7f96;box-sizing:border-box;border-radius:6px;box-shadow:0 10px 30px rgba(0,0,0,0.4);"></div>
<svg class="r" style="left:906.20px;top:603.70px;color:#6b7383" width="16" height="16" viewBox="0 0 24 24" fill="none" stroke="#6b7383" stroke-width="2" stroke-linecap="round" stroke-linejoin="round"><circle cx="11" cy="11" r="8"/><path d="m21 21-4.3-4.3"/></svg>
<div class="r" style="left:930px;top:603px;width:1.2000000000000455px;height:19px;background:#f0f0f0;"></div>
<div class="t" style="left:932.30px;top:606.15px;font-size:14px;line-height:14px;color:#8d9bb0;">Type to search...</div>
<div class="r" style="left:890px;top:634px;width:413px;height:1px;background:#3a475a;"></div>
<svg class="r" style="left:918.10px;top:641.00px;color:#aeb9c8" width="16" height="16" viewBox="0 0 24 24" fill="none" stroke="#aeb9c8" stroke-width="2" stroke-linecap="round" stroke-linejoin="round"><path d="M10 12h11"/><path d="M10 18h11"/><path d="M10 6h11"/><path d="M4 10h2"/><path d="M4 6h1v4"/><path d="M6 18H4c0-1 2-2 2-3s-1-1.5-2-1"/></svg>
<div class="t" style="left:942.00px;top:643.13px;font-size:14.5px;line-height:14.5px;color:#aeb9c8;">car_value</div>
<svg class="r" style="left:918.10px;top:669.00px;color:#aeb9c8" width="16" height="16" viewBox="0 0 24 24" fill="none" stroke="#aeb9c8" stroke-width="2" stroke-linecap="round" stroke-linejoin="round"><path d="M10 12h11"/><path d="M10 18h11"/><path d="M10 6h11"/><path d="M4 10h2"/><path d="M4 6h1v4"/><path d="M6 18H4c0-1 2-2 2-3s-1-1.5-2-1"/></svg>
<div class="t" style="left:942.00px;top:671.13px;font-size:14.5px;line-height:14.5px;color:#aeb9c8;">debt_to_income_ratio</div>
<svg class="r" style="left:918.10px;top:697.00px;color:#aeb9c8" width="16" height="16" viewBox="0 0 24 24" fill="none" stroke="#aeb9c8" stroke-width="2" stroke-linecap="round" stroke-linejoin="round"><path d="M10 12h11"/><path d="M10 18h11"/><path d="M10 6h11"/><path d="M4 10h2"/><path d="M4 6h1v4"/><path d="M6 18H4c0-1 2-2 2-3s-1-1.5-2-1"/></svg>
<div class="t" style="left:942.00px;top:699.13px;font-size:14.5px;line-height:14.5px;color:#aeb9c8;">driver_tenure</div>
<svg class="r" style="left:918.00px;top:725.00px;color:#aeb9c8" width="16" height="16" viewBox="0 0 24 24" fill="none" stroke="#aeb9c8" stroke-width="2" stroke-linecap="round" stroke-linejoin="round"><path d="M12 10a2 2 0 0 0-2 2c0 1.02-.1 2.51-.26 4"/><path d="M14 13.12c0 2.38 0 6.38-1 8.88"/><path d="M17.29 21.02c.12-.6.43-2.3.5-3.02"/><path d="M2 12a10 10 0 0 1 18-6"/><path d="M2 16h.01"/><path d="M21.8 16c.2-2 .131-5.354 0-6"/><path d="M5 19.5C5.5 18 6 15 6 12a6 6 0 0 1 .34-2"/><path d="M8.65 22c.21-.66.45-1.32.57-2"/><path d="M9 6.8a6 6 0 0 1 9 5.2v2"/></svg>
<div class="t" style="left:942.00px;top:727.13px;font-size:14.5px;line-height:14.5px;color:#aeb9c8;">id</div>
<svg class="r" style="left:918.10px;top:753.00px;color:#aeb9c8" width="16" height="16" viewBox="0 0 24 24" fill="none" stroke="#aeb9c8" stroke-width="2" stroke-linecap="round" stroke-linejoin="round"><path d="M10 12h11"/><path d="M10 18h11"/><path d="M10 6h11"/><path d="M4 10h2"/><path d="M4 6h1v4"/><path d="M6 18H4c0-1 2-2 2-3s-1-1.5-2-1"/></svg>
<div class="t" style="left:942.00px;top:755.13px;font-size:14.5px;line-height:14.5px;color:#aeb9c8;">loan_length</div>
<svg class="r" style="left:918.10px;top:781.00px;color:#aeb9c8" width="16" height="16" viewBox="0 0 24 24" fill="none" stroke="#aeb9c8" stroke-width="2" stroke-linecap="round" stroke-linejoin="round"><path d="M10 12h11"/><path d="M10 18h11"/><path d="M10 6h11"/><path d="M4 10h2"/><path d="M4 6h1v4"/><path d="M6 18H4c0-1 2-2 2-3s-1-1.5-2-1"/></svg>
<div class="t" style="left:942.00px;top:783.13px;font-size:14.5px;line-height:14.5px;color:#aeb9c8;">repaid</div>
<svg class="r" style="left:917.90px;top:809.00px;color:#aeb9c8" width="16" height="16" viewBox="0 0 24 24" fill="none" stroke="#aeb9c8" stroke-width="2" stroke-linecap="round" stroke-linejoin="round"><path d="M17 6.1H3"/><path d="M21 12.1H3"/><path d="M15.1 18H3"/></svg>
<div class="t" style="left:942.00px;top:811.13px;font-size:14.5px;line-height:14.5px;color:#aeb9c8;">repaid_loan_on_prev_car</div>
<div class="r" style="left:890px;top:831px;width:413px;height:28px;background:#334155;"></div>
<svg class="r" style="left:917.90px;top:837.00px;color:#aeb9c8" width="16" height="16" viewBox="0 0 24 24" fill="none" stroke="#aeb9c8" stroke-width="2" stroke-linecap="round" stroke-linejoin="round"><path d="M17 6.1H3"/><path d="M21 12.1H3"/><path d="M15.1 18H3"/></svg>
<div class="t" style="left:942.00px;top:839.13px;font-size:14.5px;line-height:14.5px;color:#aeb9c8;">salary_range</div>
<svg class="r" style="left:917.90px;top:865.00px;color:#aeb9c8" width="16" height="16" viewBox="0 0 24 24" fill="none" stroke="#aeb9c8" stroke-width="2" stroke-linecap="round" stroke-linejoin="round"><path d="M17 6.1H3"/><path d="M21 12.1H3"/><path d="M15.1 18H3"/></svg>
<div class="t" style="left:942.00px;top:867.13px;font-size:14.5px;line-height:14.5px;color:#aeb9c8;">size_of_downpayment</div>
<svg class="r" style="left:918.00px;top:893.00px;color:#aeb9c8" width="16" height="16" viewBox="0 0 24 24" fill="none" stroke="#aeb9c8" stroke-width="2" stroke-linecap="round" stroke-linejoin="round"><circle cx="12" cy="12" r="10"/><path d="M12 6v6l4 2"/></svg>
<div class="t" style="left:942.00px;top:895.13px;font-size:14.5px;line-height:14.5px;color:#aeb9c8;">timestamp</div>
<svg class="r" style="left:918.00px;top:921.00px;color:#aeb9c8" width="16" height="16" viewBox="0 0 24 24" fill="none" stroke="#aeb9c8" stroke-width="2" stroke-linecap="round" stroke-linejoin="round"><circle cx="12" cy="12" r="10"/><circle cx="12" cy="12" r="1"/></svg>
<div class="t" style="left:942.00px;top:923.13px;font-size:14.5px;line-height:14.5px;color:#aeb9c8;">y_pred</div>
<svg class="r" style="left:918.00px;top:949.00px;color:#aeb9c8" width="16" height="16" viewBox="0 0 24 24" fill="none" stroke="#aeb9c8" stroke-width="2" stroke-linecap="round" stroke-linejoin="round"><circle cx="12" cy="12" r="10"/><path d="M9.09 9a3 3 0 0 1 5.83 1c0 2-3 3-3 3"/><path d="M12 17h.01"/></svg>
<div class="t" style="left:942.00px;top:951.13px;font-size:14.5px;line-height:14.5px;color:#aeb9c8;">y_pred_proba</div>
<div class="r" style="left:1001px;top:1030px;width:87px;height:36px;background:#3b3c44;border-radius:5px;"></div>
<svg class="r" style="left:1008.90px;top:1036.20px;color:#f4f4f4" width="24" height="24" viewBox="0 0 24 24" fill="none" stroke="#f4f4f4" stroke-width="2" stroke-linecap="round" stroke-linejoin="round"><path d="m15 18-6-6 6-6"/></svg>
<div class="t" style="left:1042.40px;top:1040.46px;font-size:16px;line-height:16px;color:#f4f4f4;font-weight:700;">Back</div>
<div class="r" style="left:1104px;top:1030px;width:86px;height:36px;background:#4a5162;border-radius:5px;"></div>
<div class="t" style="left:1112.60px;top:1040.46px;font-size:16px;line-height:16px;color:#6b7489;font-weight:700;letter-spacing:0.8px;">Next</div>
<svg class="r" style="left:1158.00px;top:1036.20px;color:#6b7489" width="24" height="24" viewBox="0 0 24 24" fill="none" stroke="#6b7489" stroke-width="2" stroke-linecap="round" stroke-linejoin="round"><path d="m9 18 6-6-6-6"/></svg>
</body></html>
